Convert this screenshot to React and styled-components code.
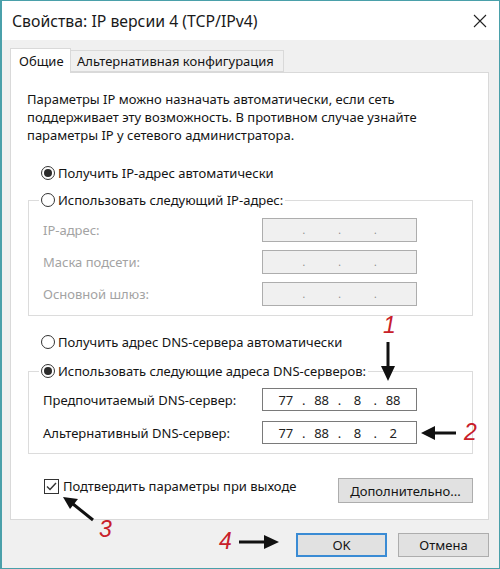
import React from 'react';
import styled, { createGlobalStyle } from 'styled-components';

const Global = createGlobalStyle`
  html, body { margin: 0; padding: 0; background: #ffffff; }
  body { font-family: "Noto Sans", "Open Sans", sans-serif; }
  * { box-sizing: border-box; }
`;

const Window = styled.div`
  position: relative;
  width: 500px;
  height: 569px;
  border: 1px solid #4aa0aa;
  border-left-width: 2px;
  background: #f0f0f0;
  display: flex;
  flex-direction: column;
  font-size: 13px;
  color: #141414;
`;

const TitleBar = styled.div`
  height: 39px;
  flex: none;
  background: #ffffff;
  display: flex;
  align-items: center;
  justify-content: space-between;
  padding: 0 12px 0 10px;
  font-size: 15.8px;
  color: #1a1a1a;
`;

const Body = styled.div`
  flex: 1;
  display: flex;
  flex-direction: column;
  padding: 8px 10px 0 8px;
`;

const TabStrip = styled.div`
  display: flex;
  align-items: flex-end;
  height: 24px;
`;

const Tab = styled.div`
  position: relative;
  z-index: 1;
  display: flex;
  align-items: center;
  height: ${p => (p.$active ? '25px' : '22px')};
  width: ${p => p.$w}px;
  margin-bottom: ${p => (p.$active ? '-1px' : '0')};
  padding: 0 ${p => (p.$active ? '8px' : '6px')};
  background: ${p => (p.$active ? '#ffffff' : '#f0f0f0')};
  border: 1px solid #d9d9d9;
  border-bottom: ${p => (p.$active ? 'none' : '1px solid #d9d9d9')};
  border-left: ${p => (p.$active ? '1px solid #d9d9d9' : 'none')};
  white-space: nowrap;
`;

const Panel = styled.div`
  height: 448px;
  background: #ffffff;
  border: 1px solid #d9d9d9;
  padding: 17px 15px 0 16px;
  display: flex;
  flex-direction: column;
`;

const Para = styled.p`
  margin: 0;
  line-height: 18px;
`;

const RadioRow = styled.div`
  display: flex;
  align-items: center;
  height: 20px;
  margin-top: ${p => p.$mt || 0}px;
  padding-left: ${p => p.$pl || 0}px;
  white-space: nowrap;
`;

const RadioCircle = styled.span`
  width: 14px;
  height: 14px;
  border-radius: 50%;
  border: 1px solid #333333;
  background: #ffffff;
  display: flex;
  align-items: center;
  justify-content: center;
  margin-right: 3px;
  flex: none;
  &::after {
    content: '';
    display: ${p => (p.$on ? 'block' : 'none')};
    width: 8px;
    height: 8px;
    border-radius: 50%;
    background: #2a2a2a;
  }
`;

const Group = styled.div`
  margin-top: ${p => p.$mt}px;
  margin-left: 1px;
  border: 1px solid #dcdcdc;
  padding: 0 55px ${p => p.$pb}px 14px;
  display: flex;
  flex-direction: column;
  gap: ${p => p.$gap}px;
`;

const Legend = styled.div`
  margin: -11px 0 -${p => p.$lg}px -4px;
  align-self: flex-start;
  background: #ffffff;
  padding: 0 2px 0 2px;
`;

const FieldRow = styled.div`
  display: flex;
  align-items: center;
  justify-content: space-between;
  height: ${p => p.$h}px;
  color: ${p => (p.$disabled ? '#a3a3a3' : '#141414')};
`;

const IpBox = styled.div`
  width: 155px;
  height: 100%;
  border: 1px solid ${p => (p.$disabled ? '#adadad' : '#7a7a7a')};
  background: ${p => (p.$disabled ? '#f0f0f0' : '#ffffff')};
  display: grid;
  grid-template-columns: 1fr 10px 1fr 10px 1fr 10px 1fr;
  align-items: center;
  text-align: center;
  padding: 0 10px 0 10px;
  color: ${p => (p.$disabled ? '#8a8a8a' : '#222222')};
  font-size: 13px;
`;

const Dot = styled.span`
  font-size: ${p => (p.$small ? '10px' : '13px')};
`;

const BottomRow = styled.div`
  margin-top: 24px;
  display: flex;
  justify-content: space-between;
  align-items: flex-start;
  padding-left: 17px;
`;

const CheckLabel = styled.div`
  display: flex;
  align-items: center;
  height: 16px;
  white-space: nowrap;
`;

const CheckBox = styled.span`
  width: 15px;
  height: 15px;
  border: 1px solid #333333;
  background: #ffffff;
  margin-right: 4px;
  display: flex;
  align-items: center;
  justify-content: center;
  flex: none;
`;

const Button = styled.button`
  font-family: inherit;
  font-size: 13px;
  color: #141414;
  height: ${p => p.$h || 24}px;
  width: ${p => p.$w}px;
  background: #e1e1e1;
  border: ${p => (p.$def ? '2px solid #3a8bd4' : '1px solid #adadad')};
  padding: 0;
  margin: 0;
  display: flex;
  align-items: center;
  justify-content: center;
`;

const Footer = styled.div`
  display: flex;
  justify-content: flex-end;
  gap: 11px;
  padding-top: 13px;
`;

const Overlay = styled.svg`
  position: absolute;
  left: -2px;
  top: -1px;
  pointer-events: none;
`;

const Num = styled.span`
  position: absolute;
  font-family: "Liberation Sans", Arial, sans-serif;
  font-style: italic;
  font-size: 23px;
  color: #c8202a;
  line-height: 1;
`;

function Radio({ on, children, mt, pl }) {
  return (
    <RadioRow $mt={mt} $pl={pl}>
      <RadioCircle $on={on} />
      {children}
    </RadioRow>
  );
}

function Ip({ disabled, parts }) {
  const p = parts || ['', '', '', ''];
  return (
    <IpBox $disabled={disabled}>
      <span>{p[0]}</span>
      <Dot $small={disabled}>.</Dot>
      <span>{p[1]}</span>
      <Dot $small={disabled}>.</Dot>
      <span>{p[2]}</span>
      <Dot $small={disabled}>.</Dot>
      <span>{p[3]}</span>
    </IpBox>
  );
}

export default function App() {
  return (
    <>
      <Global />
      <Window>
        <TitleBar>
          <span>Свойства: IP версии 4 (TCP/IPv4)</span>
          <svg width="14" height="14" viewBox="0 0 14 14">
            <path d="M1 1 L13 13 M13 1 L1 13" stroke="#222" strokeWidth="1.1" fill="none" />
          </svg>
        </TitleBar>
        <Body>
          <TabStrip>
            <Tab $active $w={61}>Общие</Tab>
            <Tab $w={213}>Альтернативная конфигурация</Tab>
          </TabStrip>
          <Panel>
            <Para>
              Параметры IP можно назначать автоматически, если сеть
              <br />
              поддерживает эту возможность. В противном случае узнайте
              <br />
              параметры IP у сетевого администратора.
            </Para>
            <Radio on mt={19} pl={14}>Получить IP-адрес автоматически</Radio>
            <Group $mt={17} $pb={9} $gap={8}>
              <Legend $lg={0}>
                <Radio>Использовать следующий IP-адрес:</Radio>
              </Legend>
              <FieldRow $disabled $h={24}>
                <span>IP-адрес:</span>
                <Ip disabled />
              </FieldRow>
              <FieldRow $disabled $h={24}>
                <span>Маска подсети:</span>
                <Ip disabled />
              </FieldRow>
              <FieldRow $disabled $h={24}>
                <span>Основной шлюз:</span>
                <Ip disabled />
              </FieldRow>
            </Group>
            <Radio mt={16} pl={14}>Получить адрес DNS-сервера автоматически</Radio>
            <Group $mt={19} $pb={9} $gap={10}>
              <Legend $lg={3}>
                <Radio on>Использовать следующие адреса DNS-серверов:</Radio>
              </Legend>
              <FieldRow $h={23}>
                <span>Предпочитаемый DNS-сервер:</span>
                <Ip parts={['77', '88', '8', '88']} />
              </FieldRow>
              <FieldRow $h={23}>
                <span>Альтернативный DNS-сервер:</span>
                <Ip parts={['77', '88', '8', '2']} />
              </FieldRow>
            </Group>
            <BottomRow>
              <CheckLabel>
                <CheckBox>
                  <svg width="11" height="9" viewBox="0 0 11 9">
                    <path d="M1 4.5 L4 7.5 L10 1" stroke="#333" strokeWidth="1.4" fill="none" />
                  </svg>
                </CheckBox>
                Подтвердить параметры при выходе
              </CheckLabel>
              <Button $w={135} $h={25}>Дополнительно...</Button>
            </BottomRow>
          </Panel>
          <Footer>
            <Button $def $w={91}>OK</Button>
            <Button $w={91}>Отмена</Button>
          </Footer>
        </Body>
        <Overlay width="500" height="569" viewBox="0 0 500 569">
          <g fill="#111" stroke="#111">
            <path d="M388 342 L388 368" strokeWidth="3" />
            <path d="M381 366 L395 366 L388 381 Z" stroke="none" />
            <path d="M456 433 L433 433" strokeWidth="3" />
            <path d="M435 426 L435 440 L421 433 Z" stroke="none" />
            <path d="M93 520 L73 504" strokeWidth="3" />
            <path d="M70 509 L78 499 L63 497 Z" stroke="none" />
            <path d="M239 542 L266 542" strokeWidth="3" />
            <path d="M264 535 L264 549 L279 542 Z" stroke="none" />
          </g>
        </Overlay>
        <Num style={{ left: 381, top: 313 }}>1</Num>
        <Num style={{ left: 462, top: 420 }}>2</Num>
        <Num style={{ left: 97, top: 517 }}>3</Num>
        <Num style={{ left: 217, top: 529 }}>4</Num>
      </Window>
    </>
  );
}
